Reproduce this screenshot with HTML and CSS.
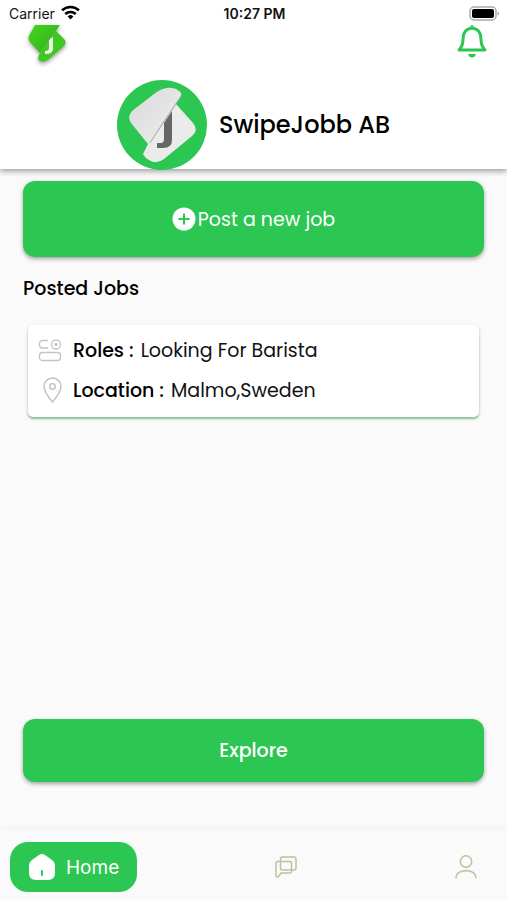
FILE: index.html
```html
<!DOCTYPE html>
<html lang="en">
<head>
    <meta charset="utf-8">
    <meta name="viewport" content="width=device-width, initial-scale=1.0">
    <title>SwipeJobb</title>
    <link rel="stylesheet" href="styles.css">
</head>
<body>
    <header class="header">
        <div class="statusbar">
            <div class="carrier">
                <span>Carrier</span>
                <svg width="19" height="15" viewBox="0 0 18 14" fill="none" stroke="#000" stroke-width="2.5">
                    <path d="M1 5a11.500 11.500 0 0 1 16 0"/>
                    <path d="M4 8.500a7.300 7.300 0 0 1 10 0"/>
                    <path d="M6.300 10.700a4 4 0 0 1 5.400 0L9 13.700z" fill="#000" stroke="none"/>
                </svg>
            </div>
            <time>10:27 PM</time>
            <div class="battery">
                <svg width="31" height="15" viewBox="0 0 31 15">
                    <rect x="1" y="1" width="26" height="13" rx="4" fill="#fff" stroke="#aaa" stroke-width="1.500"/>
                    <rect x="3" y="3" width="22" height="9" rx="2" fill="#000"/>
                    <path d="M28.500 5.500c2 .5 2 3.500 0 4z" fill="#aaa"/>
                </svg>
            </div>
        </div>
        <div class="topbar">
            <svg class="logo" width="44" height="44" viewBox="0 0 44 44">
                <defs>
                    <linearGradient id="leaf" x1="0" y1="0" x2="1" y2="1">
                        <stop offset="0" stop-color="#45d51d"/>
                        <stop offset="1" stop-color="#2fae1c"/>
                    </linearGradient>
                </defs>
                <path d="M31 6l8 8q3 3 0 7L24 34q-5 4-9 2-3-2-1-6z" fill="#3fc821"/>
                <path d="M28 12v12q0 5-8 5v-3q4 0 4-3v-9z" fill="#e9f8e5"/>
                <path d="M10 0h25L15 28 5 17q-3-4 0-8z" fill="url(#leaf)"/>
            </svg>
            <button class="bell" aria-label="Notifications">
                <svg width="30" height="33" viewBox="0 0 30 33" fill="none" stroke="#2cc653" stroke-width="3" stroke-linejoin="round" stroke-linecap="round">
                    <path d="M2 25q4-4 4-11 0-10 9-11 9 1 9 11 0 7 4 11z"/>
                    <path d="M15 1.500v1"/>
                    <path d="M11 29h8q-1 3.500-4 3.500T11 29z" fill="#2cc653" stroke="none"/>
                </svg>
            </button>
        </div>
        <div class="company">
            <svg class="avatar" width="90" height="90" viewBox="0 0 90 90">
                <defs>
                    <linearGradient id="paper" x1="0" y1="0" x2="1" y2="1">
                        <stop offset="0" stop-color="#d9d9d9"/>
                        <stop offset="1" stop-color="#efefef"/>
                    </linearGradient>
                </defs>
                <circle cx="45" cy="45" r="45" fill="#2cc653"/>
                <path d="M59 24L76 43q6 7-1 13L47 79q-8 6-15 1-4-2-6-6l6-12z" fill="#ebebeb"/>
                <path d="M55 31v29q0 8-9 8h-6v-5h4q3 0 3-4V43z" fill="#666"/>
                <path d="M50 8q7-1 12 3 3 2 2 5L31 64 14 43q-4-6 1-12L37 14q6-5 13-6z" fill="url(#paper)"/>
                <path d="M64 16L33 63" stroke="#aaa" stroke-width="1"/>
            </svg>
            <h1>SwipeJobb AB</h1>
        </div>
    </header>

    <main class="content">
        <button class="btn post">
            <svg width="24" height="24" viewBox="0 0 24 24">
                <circle cx="12" cy="12" r="11.500" fill="#fff"/>
                <path d="M12 6.500v11M6.500 12h11" stroke="#2cc653" stroke-width="2"/>
            </svg>
            Post a new job
        </button>
        <h2>Posted Jobs</h2>
        <article class="job">
            <p class="row">
                <svg width="24" height="24" viewBox="0 0 24 24" fill="none" stroke="#c4c4c4" stroke-width="1.300">
                    <path d="M10 2.500H4.500a3 3 0 0 0-3 3V7a3 3 0 0 0 3 3H10"/>
                    <circle cx="18" cy="6.500" r="4.500"/>
                    <circle cx="18" cy="6.500" r="1" fill="#aaa"/>
                    <rect x="1.500" y="14.500" width="21" height="8" rx="3"/>
                </svg>
                <strong>Roles :</strong> <span>Looking For Barista</span>
            </p>
            <p class="row">
                <svg width="24" height="26" viewBox="0 0 24 26" fill="none" stroke="#bdbdbd" stroke-width="1.300">
                    <path d="M14.500 25Q6 15 6 9.500a8.500 8.500 0 0 1 17 0Q23 15 14.500 25z"/>
                    <circle cx="14.500" cy="9.500" r="2.800"/>
                </svg>
                <strong>Location :</strong> <span>Malmo,Sweden</span>
            </p>
        </article>
        <button class="btn explore">Explore</button>
    </main>

    <nav class="tabs">
        <a href="#home" class="tab active">
            <svg width="28" height="28" viewBox="0 0 28 28">
                <path d="M11 2q3-2 6 0l7 5q3 2 3 6v7q0 7-7 7H8q-7 0-7-7v-7q0-4 3-6z" fill="#fff"/>
                <path d="M14 18v4" stroke="#2cc653" stroke-width="2" stroke-linecap="round"/>
            </svg>
            Home
        </a>
        <a href="#messages" class="tab side" aria-label="Messages">
            <svg width="22" height="22" viewBox="0 0 22 22" fill="none" stroke="#b9c49b" stroke-width="1.500" stroke-linejoin="round">
                <rect x="5.500" y="1" width="15.500" height="13" rx="2"/>
                <path d="M3 5.500h11.500q2 0 2 2V15q0 2-2 2H6l-2.500 3.500Q1 22 1 19V7.500q0-2 2-2z"/>
            </svg>
        </a>
        <a href="#profile" class="tab side" aria-label="Profile">
            <svg width="22" height="24" viewBox="0 0 22 24" fill="none" stroke="#b9c49b" stroke-width="1.500">
                <circle cx="11" cy="6.500" r="5.700"/>
                <path d="M1 23.500q0-7.500 10-8 10 .5 10 8"/>
            </svg>
        </a>
    </nav>
</body>
</html>
```
FILE: styles.css
```css
* {
    box-sizing: border-box;
}
body {
    margin: 0;
    min-height: 100vh;
    display: flex;
    flex-direction: column;
    background-color: #fafafa;
    color: #111;
    font-family: Poppins, Inter, sans-serif;
    font-size: 19px;
}
h1, h2, p {
    margin: 0;
}
svg {
    display: block;
    flex: none;
}
button {
    border: none;
    padding: 0;
    font: inherit;
    cursor: pointer;
}
.header {
    background-color: #fff;
    box-shadow: 0 2px 6px rgba(0, 0, 0, 0.4);
}
.statusbar {
    display: grid;
    grid-template-columns: 1fr auto 1fr;
    align-items: center;
    height: 25px;
    padding: 2px 7px 0 9px;
    font-family: Inter, sans-serif;
    font-size: 14px;
}
.statusbar time {
    font-weight: 600;
}
.carrier {
    display: flex;
    gap: 6px;
}
.battery {
    justify-self: end;
}
.topbar {
    display: flex;
    justify-content: space-between;
    align-items: flex-start;
    height: 55px;
    padding: 0 20px 0 25px;
}
.logo {
    filter: drop-shadow(0 2px 2px rgba(0, 0, 0, 0.4));
}
.bell {
    background: none;
}
.company {
    display: flex;
    justify-content: center;
    align-items: center;
    gap: 12px;
    height: 89px;
}
.company h1 {
    color: #000;
    font-size: 24px;
    font-weight: 500;
}
.content {
    flex: 1;
    display: flex;
    flex-direction: column;
    padding: 12px 23px 48px;
}
.btn {
    display: flex;
    align-items: center;
    justify-content: center;
    border-radius: 12px;
    background-color: #2cc653;
    color: #fff;
    box-shadow: 0 2px 4px rgba(0, 0, 0, 0.35);
}
.post {
    gap: 2px;
    height: 76px;
}
.explore {
    height: 63px;
    margin-top: auto;
    font-weight: 500;
}
.content h2 {
    margin: 20px 0 24px;
    color: #000;
    font-size: 19px;
    font-weight: 500;
    line-height: 24px;
}
.job {
    margin: 0 5px;
    padding: 5px 10px 7px;
    border-radius: 5px;
    background-color: #fff;
    box-shadow: 0 2px 2px rgba(44, 150, 75, 0.5), 0 1px 4px rgba(0, 0, 0, 0.1);
}
.row {
    display: flex;
    align-items: center;
    gap: 7px;
    height: 40px;
}
.row svg {
    margin-right: 4px;
}
.row strong {
    color: #000;
    font-weight: 500;
}
.tabs {
    display: flex;
    align-items: center;
    justify-content: space-between;
    height: 70px;
    padding: 4px 10px 0;
    box-shadow: 0 -2px 6px rgba(0, 0, 0, 0.04);
}
.tab {
    color: #b9c49b;
    text-decoration: none;
}
.active {
    display: flex;
    align-items: center;
    gap: 10px;
    height: 50px;
    padding: 0 18px;
    border-radius: 18px;
    background-color: #2cc653;
    color: #fff;
    font-family: Inter, sans-serif;
}
.side {
    padding-right: 20px;
}
```
